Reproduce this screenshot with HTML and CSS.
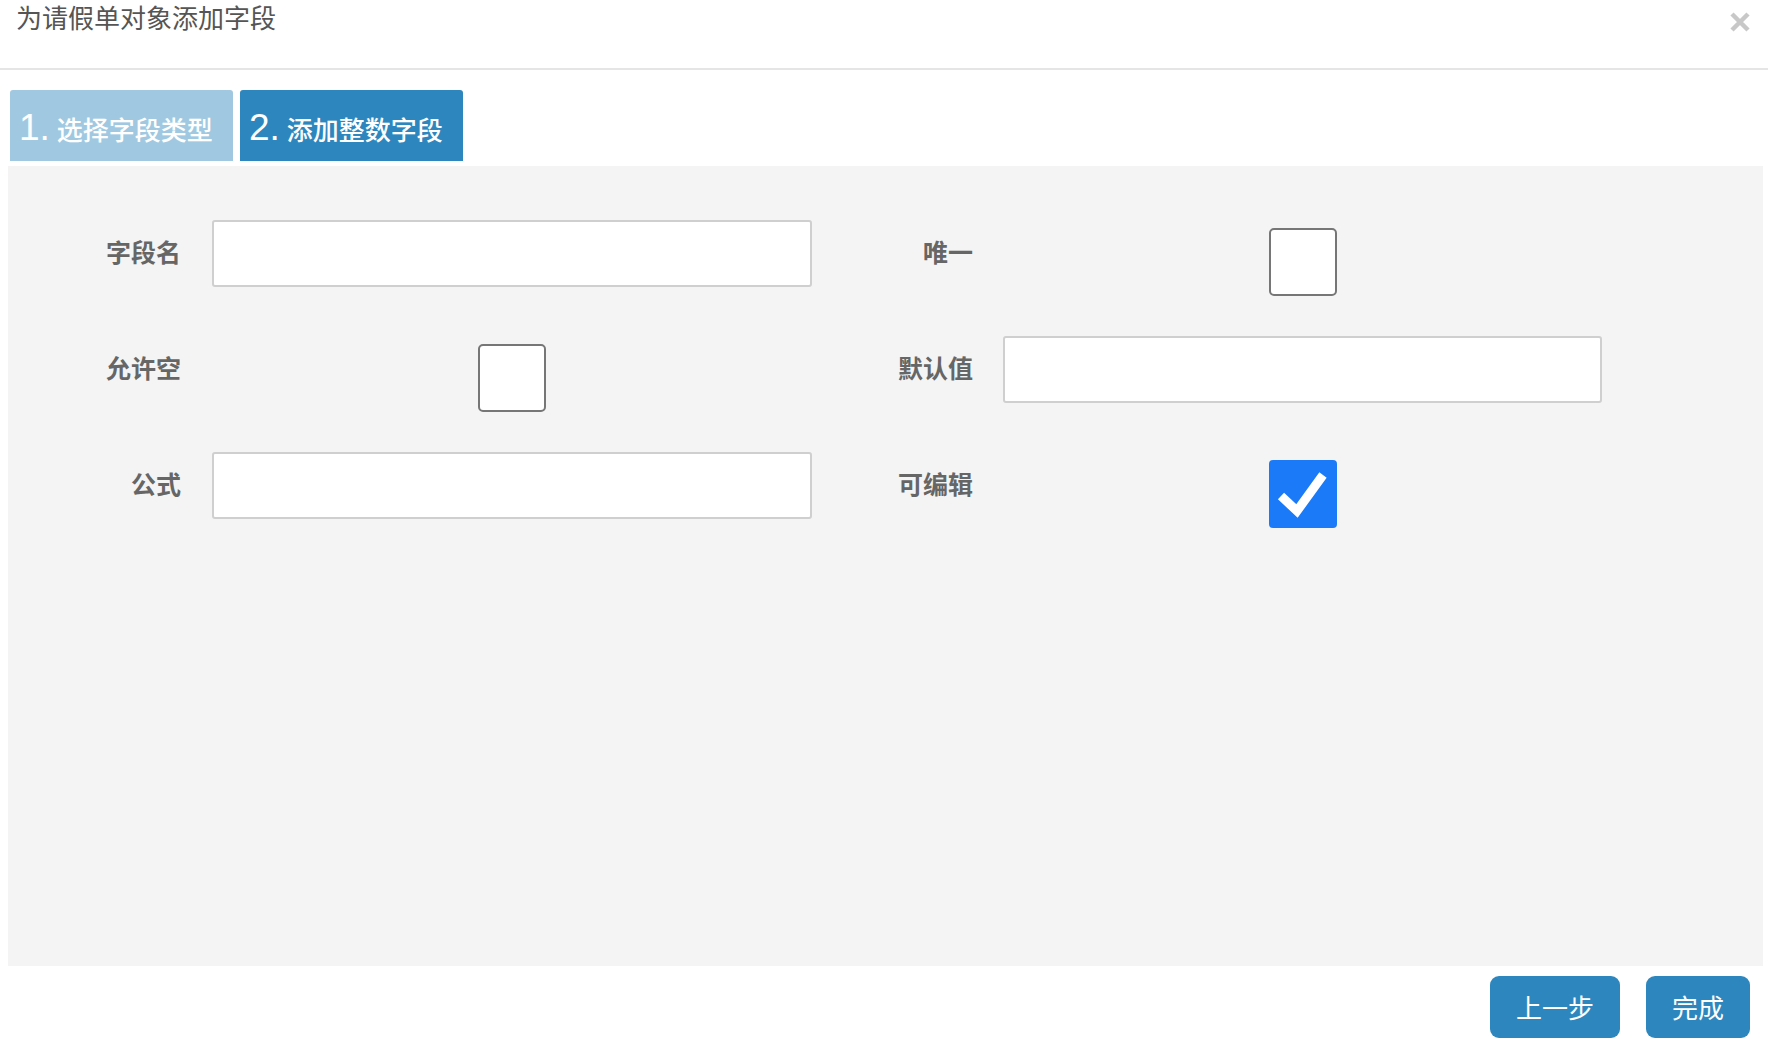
FILE: index.html
```html
<!DOCTYPE html>
<html lang="zh">
<head>
<meta charset="utf-8">
<title>为请假单对象添加字段</title>
<link rel="stylesheet" href="styles.css">
</head>
<body>
<div class="modal">
  <div class="modal-header">
    <h4 class="modal-title">为请假单对象添加字段</h4>
    <button class="close" type="button" aria-label="关闭">
      <svg width="20" height="20" viewBox="0 0 20 20"><path d="M2 2 L18 18 M18 2 L2 18" stroke="#c8c8c8" stroke-width="4.5" stroke-linecap="butt"/></svg>
    </button>
  </div>
  <div class="steps">
    <div class="step done"><span class="num">1.</span><span class="step-text">选择字段类型</span></div>
    <div class="step active"><span class="num">2.</span><span class="step-text">添加整数字段</span></div>
  </div>
  <div class="panel">
    <div class="form-grid">
      <label class="lbl">字段名</label>
      <div class="ctl"><input class="text-input" type="text"></div>
      <label class="lbl lbl-r">唯一</label>
      <div class="ctl ctl-center"><span class="checkbox"></span></div>

      <label class="lbl">允许空</label>
      <div class="ctl ctl-center"><span class="checkbox"></span></div>
      <label class="lbl lbl-r">默认值</label>
      <div class="ctl"><input class="text-input" type="text"></div>

      <label class="lbl">公式</label>
      <div class="ctl"><input class="text-input" type="text"></div>
      <label class="lbl lbl-r">可编辑</label>
      <div class="ctl ctl-center"><span class="checkbox checked"><svg width="68" height="68" viewBox="0 0 68 68"><polyline points="12,36 28,51 54,15" fill="none" stroke="#fff" stroke-width="9" stroke-linejoin="miter" stroke-linecap="butt"/></svg></span></div>
    </div>
  </div>
  <div class="modal-footer">
    <button class="btn btn-prev" type="button">上一步</button>
    <button class="btn btn-done" type="button">完成</button>
  </div>
</div>
</body>
</html>
```
FILE: styles.css
```css
* { box-sizing: border-box; }
html, body {
  margin: 0;
  padding: 0;
  background: #fff;
}
body {
  font-family: "Liberation Sans", "Noto Sans CJK SC", sans-serif;
  color: #555;
}
.modal {
  width: 1768px;
  height: 1052px;
  display: flex;
  flex-direction: column;
}
.modal-header {
  height: 70px;
  border-bottom: 2px solid #e5e5e5;
  display: flex;
  justify-content: space-between;
  align-items: flex-start;
  padding: 0 18px 0 16px;
}
.modal-title {
  margin: 0;
  font-size: 26px;
  font-weight: normal;
  line-height: 38px;
  color: #555;
}
.close {
  border: 0;
  background: none;
  padding: 0;
  margin-top: 12px;
  width: 20px;
  height: 20px;
  display: block;
}
.close svg { display: block; }
.steps {
  display: flex;
  gap: 7px;
  padding-left: 10px;
  margin-top: 20px;
  height: 71px;
}
.step {
  display: flex;
  align-items: baseline;
  padding: 13px 18px 0 9px;
  border-radius: 3px 3px 0 0;
  color: #fff;
  width: 223px;
}
.step.done { background: #a0c9e1; }
.step.active { background: #2d87be; }
.num {
  font-size: 37px;
  line-height: 50px;
  margin-right: 7px;
}
.step-text {
  font-size: 26px;
  font-family: "Noto Sans CJK SC", sans-serif;
  font-weight: 500;
}
.panel {
  margin: 5px 5px 0 8px;
  height: 800px;
  background: #f4f4f4;
  padding-top: 54px;
}
.form-grid {
  display: grid;
  grid-template-columns: 204px 600px 191px 599px;
  grid-auto-rows: 67px;
  row-gap: 49px;
}
.lbl {
  align-self: center;
  text-align: right;
  padding-right: 31px;
  font-family: "Noto Sans CJK SC", sans-serif;
  font-weight: bold;
  font-size: 25px;
  color: #666;
  line-height: 30px;
  margin-top: -6px;
}
.lbl-r { padding-right: 30px; }
.ctl { display: flex; }
.ctl-center { justify-content: center; align-items: flex-start; }
.text-input {
  width: 100%;
  height: 67px;
  border: 2px solid #cfcfcf;
  border-radius: 3px;
  background: #fff;
  margin: 0;
  font-size: 26px;
}
.checkbox {
  display: block;
  width: 68px;
  height: 68px;
  margin-top: 8px;
  border: 2px solid #767676;
  border-radius: 5px;
  background: #fff;
}
.checkbox.checked {
  background: #1a7af8;
  border: 0;
  border-radius: 4px;
}
.checkbox svg { display: block; }
.modal-footer {
  display: flex;
  justify-content: flex-end;
  gap: 26px;
  padding-right: 18px;
  margin-top: 10px;
}
.btn {
  height: 62px;
  border: 0;
  border-radius: 9px;
  background: #2d87be;
  color: #fff;
  font-family: "Noto Sans CJK SC", sans-serif;
  font-size: 26px;
  padding: 0 26px;
  line-height: 62px;
}
.btn-prev { width: 130px; }
.btn-done { width: 104px; }
```
